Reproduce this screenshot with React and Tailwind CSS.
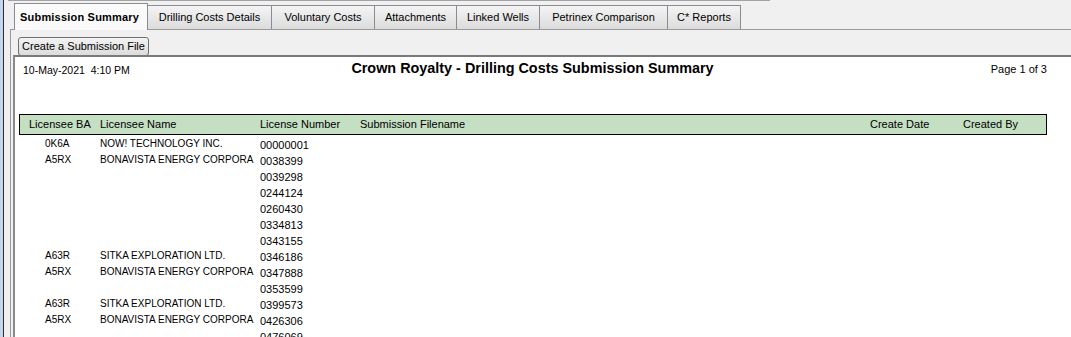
import React from "react";

const tabs = [
  { label: "Submission Summary", w: "w-[134px]", active: true },
  { label: "Drilling Costs Details", w: "w-[124px]" },
  { label: "Voluntary Costs", w: "w-[103px]" },
  { label: "Attachments", w: "w-[82px]" },
  { label: "Linked Wells", w: "w-[83px]" },
  { label: "Petrinex Comparison", w: "w-[128px]" },
  { label: "C* Reports", w: "w-[73px]" },
];

const rows = [
  ["0K6A", "NOW! TECHNOLOGY INC.", "00000001"],
  ["A5RX", "BONAVISTA ENERGY CORPORA", "0038399"],
  ["", "", "0039298"],
  ["", "", "0244124"],
  ["", "", "0260430"],
  ["", "", "0334813"],
  ["", "", "0343155"],
  ["A63R", "SITKA EXPLORATION LTD.", "0346186"],
  ["A5RX", "BONAVISTA ENERGY CORPORA", "0347888"],
  ["", "", "0353599"],
  ["A63R", "SITKA EXPLORATION LTD.", "0399573"],
  ["A5RX", "BONAVISTA ENERGY CORPORA", "0426306"],
  ["", "", "0476069"],
];

export default function App() {
  return (
    <div className="w-[1071px] h-[337px] overflow-hidden flex bg-[#f0f0f0] text-black font-['Liberation_Sans',Arial,sans-serif]">
      {/* window frame edge */}
      <div className="w-[3px] bg-[#c4d7ee]" />
      <div className="w-px bg-[#2e2e2e]" />

      <div className="flex-1 flex flex-col min-w-0">
        <div className="h-px w-[762px] ml-[4px] bg-[#a3a3a3]" />

        {/* Tabs */}
        <div className="h-[28px] flex items-end pl-[10px]">
          {tabs.map((t, i) =>
            t.active ? (
              <div
                key={i}
                className={`${t.w} h-[27px] -mb-px relative z-10 bg-[#fafafa] border border-b-0 border-[#898c95] flex items-center pl-[5px] text-[11px] font-bold tracking-[0.2px]`}
              >
                {t.label}
              </div>
            ) : (
              <div
                key={i}
                className={`${t.w} h-[24px] bg-gradient-to-b from-[#f4f4f4] to-[#dcdcdc] border border-b-0 border-l-0 border-[#898c95] flex items-center justify-center text-[11px]`}
              >
                {t.label}
              </div>
            )
          )}
        </div>

        {/* Tab panel */}
        <div className="flex-1 flex flex-col ml-[6px] border-t border-l border-[#9a9a9a] min-h-0">
          <div className="h-[25px] pl-[7px] pt-[3px]">
            <button className="h-[19px] w-[131px] rounded-[3px] border border-[#707070] bg-gradient-to-b from-[#f3f3f3] to-[#dcdcdc] text-[11px] leading-none">
              Create a Submission File
            </button>
          </div>

          {/* Report pane */}
          <div className="flex-1 ml-[2px] border-t-2 border-l-2 border-t-[#7a7a7a] border-l-[#8a8a8a] bg-white min-h-0 overflow-hidden">
            <div className="w-[1035px]">
              <div className="h-[57px] grid grid-cols-[1fr_auto_1fr] items-start">
                <span className="mt-[7px] pl-[8px] text-[10.5px] leading-[12px] whitespace-pre">10-May-2021  4:10 PM</span>
                <span className="mt-[3px] text-[14.4px] leading-[17px] font-bold">
                  Crown Royalty - Drilling Costs Submission Summary
                </span>
                <span className="mt-[6px] pr-[3px] text-right text-[11px] leading-[13px]">Page 1 of 3</span>
              </div>

              <div className="ml-[4px] w-[1028px] h-[21px] border border-black bg-[#c4dfc2] grid grid-cols-[71px_160px_100px_510px_93px_1fr] items-center pl-[9px] text-[11px] leading-[13px]">
                <span>Licensee BA</span>
                <span>Licensee Name</span>
                <span>License Number</span>
                <span>Submission Filename</span>
                <span>Create Date</span>
                <span>Created By</span>
              </div>

              <div className="ml-[5px] pt-[1px]">
                {rows.map((r, i) => (
                  <div key={i} className="h-[16px] grid grid-cols-[80px_160px_1fr] items-center">
                    <span className="pl-[25px] text-[10px] leading-[12px]">{r[0]}</span>
                    <span className="text-[10px] leading-[12px] whitespace-nowrap">{r[1]}</span>
                    <span className="text-[11px] leading-[13px] mt-[2px]">{r[2]}</span>
                  </div>
                ))}
              </div>
            </div>
          </div>
        </div>
      </div>
    </div>
  );
}
